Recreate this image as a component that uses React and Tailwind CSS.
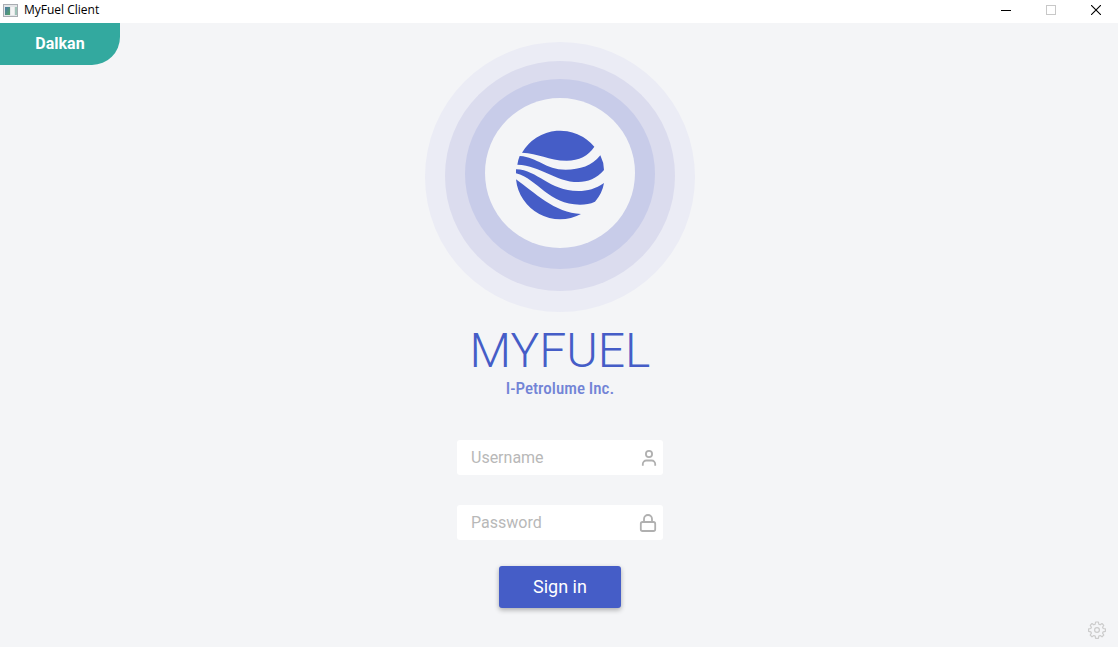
function Emblem() {
  return (
    <svg width="270" height="270" viewBox="0 0 270 270" role="img" aria-label="MyFuel logo" className="shrink-0">
      <circle cx="135" cy="135" r="135" fill="#ebecf5" />
      <circle cx="135" cy="134" r="115" fill="#dbdcee" />
      <circle cx="135" cy="132" r="95" fill="#c8cce9" />
      <circle cx="135" cy="131" r="75" fill="#f4f5f7" />
      <g transform="translate(80 78) scale(0.33333)" fill="#455dc7">
        <path d="M51 98A133 133 0 0 1 268 80C250 107 222 122 185 122C130 122 100 99 51 98Z" />
        <path d="M44 108C100 112 120 149 182 149C226 149 260 138 286 106Q297 128 297 150C275 176 248 186 220 186C150 186 110 137 37 134Q39 120 44 108Z" />
        <path d="M33 148C100 150 130 213 220 213C248 213 272 206 297 189Q292 220 270 245C255 252 242 254 225 254C130 254 100 178 33 160Z" />
        <path d="M33 178C85 215 150 280 228 282A133 133 0 0 1 33 178Z" />
      </g>
    </svg>
  );
}

function AppIcon() {
  return (
    <svg width="15" height="13" viewBox="0 0 15 13" aria-hidden="true">
      <defs>
        <linearGradient id="pane" x1="0" y1="0" x2="1" y2="1">
          <stop offset="0" stopColor="#4a78a8" />
          <stop offset="1" stopColor="#55a565" />
        </linearGradient>
      </defs>
      <rect x="0.5" y="0.5" width="14" height="12" fill="#e4e6e8" stroke="#a9adb2" />
      <rect x="2" y="3" width="5" height="8" fill="url(#pane)" />
      <rect x="8" y="3" width="3" height="8" fill="#f4f5f5" />
      <rect x="12" y="3" width="2" height="8" fill="#9fc3b8" />
    </svg>
  );
}

function UserIcon() {
  return (
    <svg width="20" height="20" viewBox="0 0 20 20" fill="none" stroke="#b0b0b0" strokeWidth="1.8" aria-hidden="true">
      <circle cx="11" cy="6" r="3.1" />
      <path d="M4.8 17.8V16a3.5 3.5 0 0 1 3.5-3.5h5.4a3.5 3.5 0 0 1 3.5 3.5v1.8" />
    </svg>
  );
}

function LockIcon() {
  return (
    <svg width="20" height="20" viewBox="0 0 20 20" fill="none" stroke="#b0b0b0" strokeWidth="1.8" aria-hidden="true">
      <rect x="2.8" y="9" width="14.4" height="9" rx="1.8" />
      <path d="M6 9V6a4 4 0 0 1 8 0v3" />
    </svg>
  );
}

function GearIcon() {
  return (
    <svg width="18" height="18" viewBox="0 0 18 18" fill="none" stroke="#cccccc" strokeWidth="1.2" strokeLinejoin="round" aria-hidden="true">
      <path d="M7.6 1h2.8l.4 2.2 1.4.6L14 2.5l1.8 1.8-1.2 1.9.6 1.3 2.2.4v2.4l-2.2.5-.6 1.3 1.2 1.9-1.8 1.8-1.8-1.3-1.4.6-.4 2.2H7.6l-.4-2.2-1.4-.6L4 15.8 2.2 14l1.2-1.9-.6-1.3-2.2-.5V7.9l2.2-.4.6-1.3-1.2-1.9L4 2.5l1.8 1.3 1.4-.6z" />
      <circle cx="9" cy="9" r="2.4" />
    </svg>
  );
}

function Field({ id, label, type, autoComplete, icon }) {
  return (
    <div className="flex h-[35px] w-full items-center rounded-[3px] bg-white pr-[5px] pl-3.5">
      <input
        id={id}
        type={type}
        placeholder={label}
        aria-label={label}
        autoComplete={autoComplete}
        className="min-w-0 flex-1 bg-transparent text-base text-gray-700 outline-none placeholder:text-[#b8b8b8]"
      />
      <label htmlFor={id}>{icon}</label>
    </div>
  );
}

export default function App() {
  return (
    <div className="flex min-h-screen flex-col bg-[#f4f5f7] font-['Roboto',sans-serif]">
      <header className="flex items-start justify-between bg-white pb-[3px] pl-[3px]">
        <div className="flex h-5 items-center gap-1.5">
          <AppIcon />
          <h1 className="font-['Open_Sans','Noto_Sans',sans-serif] text-xs leading-5 text-black">MyFuel Client</h1>
        </div>
        <div className="flex h-5">
          <button type="button" aria-label="Minimize" className="flex w-[45px] items-center justify-center">
            <svg width="10" height="10" viewBox="0 0 10 10" aria-hidden="true">
              <path d="M0 5.5h10" stroke="#000" />
            </svg>
          </button>
          <button type="button" aria-label="Maximize" disabled className="flex w-[45px] items-center justify-center">
            <svg width="10" height="10" viewBox="0 0 10 10" aria-hidden="true">
              <rect x="0.5" y="0.5" width="9" height="9" fill="none" stroke="#c8c8c8" />
            </svg>
          </button>
          <button type="button" aria-label="Close" className="flex w-[45px] items-center justify-center">
            <svg width="10" height="10" viewBox="0 0 10 10" aria-hidden="true">
              <path d="M0 0l10 10M10 0L0 10" stroke="#000" strokeWidth="1.1" />
            </svg>
          </button>
        </div>
      </header>

      <main className="relative flex flex-1 flex-col items-center pt-[19px] pb-8 pl-0.5">
        <div className="absolute top-0 left-0 flex h-[42px] w-[120px] items-center justify-center rounded-br-[28px] bg-[#33a99f] text-base font-bold text-white">
          Dalkan
        </div>

        <Emblem />
        <h2 className="mt-3 text-5xl leading-[54px] font-light text-[#455dc7]">MYFUEL</h2>
        <p className="font-['Roboto_Condensed','Liberation_Sans_Narrow',sans-serif] text-[17px] leading-5 font-medium text-[#7284d6]">
          I-Petrolume Inc.
        </p>

        <form className="mt-[42px] flex w-[206px] flex-col items-center" onSubmit={(e) => e.preventDefault()}>
          <div className="flex w-full flex-col gap-[30px]">
            <Field id="username" label="Username" type="text" autoComplete="username" icon={<UserIcon />} />
            <Field id="password" label="Password" type="password" autoComplete="current-password" icon={<LockIcon />} />
          </div>
          <button
            type="submit"
            className="mt-[26px] h-[42px] w-[122px] rounded-[3px] bg-[#455dc7] text-lg text-white shadow-[0_2px_5px_rgba(0,0,0,0.3)]"
          >
            Sign in
          </button>
        </form>

        <button type="button" aria-label="Settings" className="absolute right-3 bottom-2">
          <GearIcon />
        </button>
      </main>
    </div>
  );
}
